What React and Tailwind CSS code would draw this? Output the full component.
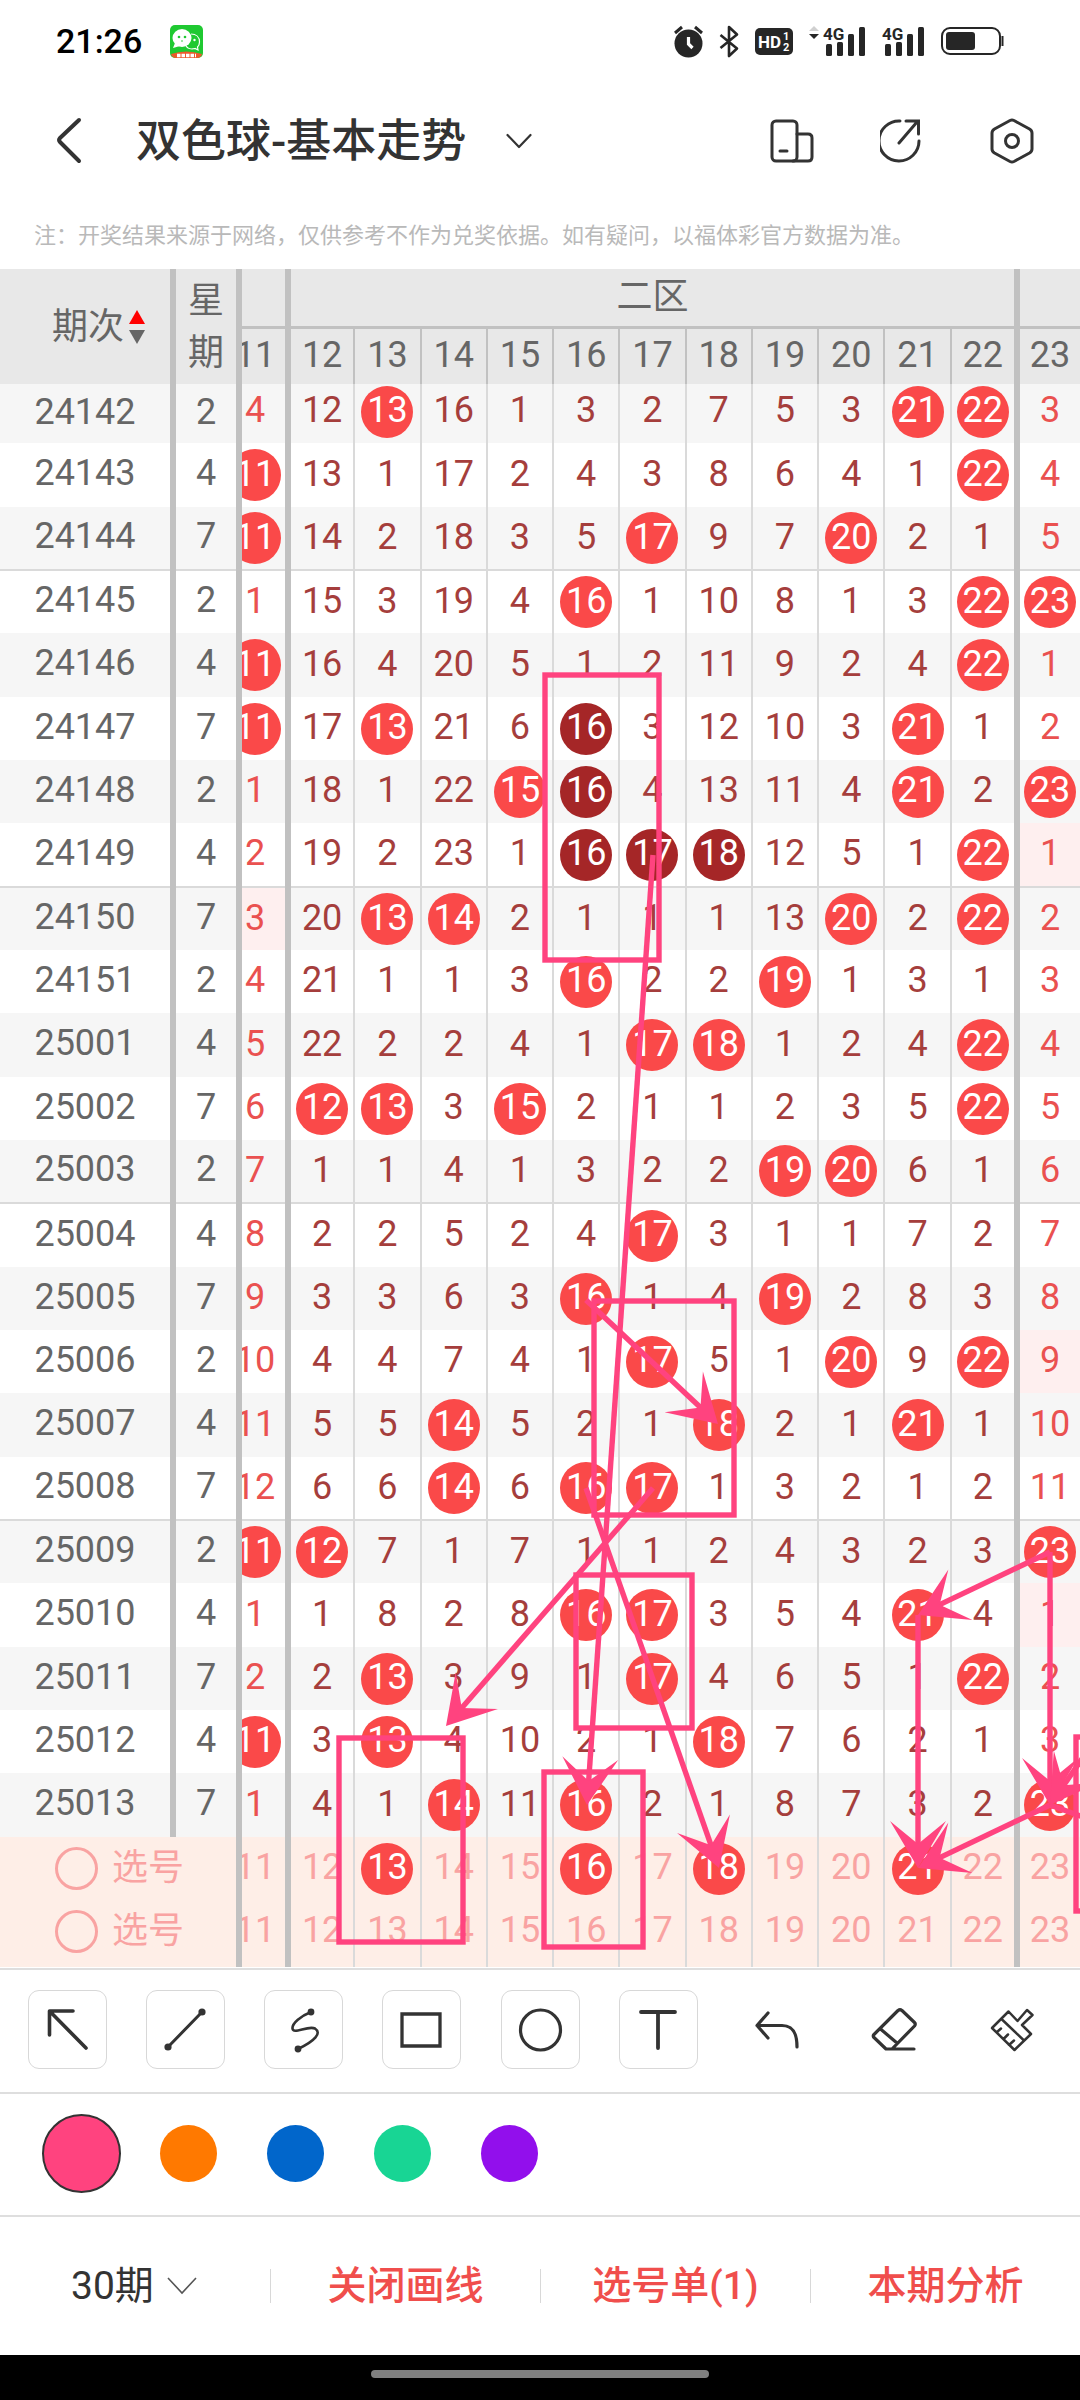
import { Fragment } from "react";

// "*" drawn ball, "!" ball in a streak, "~" tinted cell
const draws = [
  ["24142", 2, "4 12 *13 16 1 3 2 7 5 3 *21 *22 3"],
  ["24143", 4, "*11 13 1 17 2 4 3 8 6 4 1 *22 4"],
  ["24144", 7, "*11 14 2 18 3 5 *17 9 7 *20 2 1 5"],
  ["24145", 2, "1 15 3 19 4 *16 1 10 8 1 3 *22 *23"],
  ["24146", 4, "*11 16 4 20 5 1 2 11 9 2 4 *22 1"],
  ["24147", 7, "*11 17 *13 21 6 !16 3 12 10 3 *21 1 2"],
  ["24148", 2, "1 18 1 22 *15 !16 4 13 11 4 *21 2 *23"],
  ["24149", 4, "2 19 2 23 1 !16 !17 !18 12 5 1 *22 ~1"],
  ["24150", 7, "~3 20 *13 *14 2 1 1 1 13 *20 2 *22 2"],
  ["24151", 2, "4 21 1 1 3 *16 2 2 *19 1 3 1 3"],
  ["25001", 4, "5 22 2 2 4 1 *17 *18 1 2 4 *22 4"],
  ["25002", 7, "6 *12 *13 3 *15 2 1 1 2 3 5 *22 5"],
  ["25003", 2, "7 1 1 4 1 3 2 2 *19 *20 6 1 6"],
  ["25004", 4, "8 2 2 5 2 4 *17 3 1 1 7 2 7"],
  ["25005", 7, "9 3 3 6 3 *16 1 4 *19 2 8 3 8"],
  ["25006", 2, "10 4 4 7 4 1 *17 5 1 *20 9 *22 ~9"],
  ["25007", 4, "11 5 5 *14 5 2 1 *18 2 1 *21 1 10"],
  ["25008", 7, "12 6 6 *14 6 *16 *17 1 3 2 1 2 11"],
  ["25009", 2, "*11 *12 7 1 7 1 1 2 4 3 2 3 *23"],
  ["25010", 4, "1 1 8 2 8 *16 *17 3 5 4 *21 4 ~1"],
  ["25011", 7, "2 2 *13 3 9 1 *17 4 6 5 1 *22 2"],
  ["25012", 4, "*11 3 *13 4 10 2 1 *18 7 6 2 1 3"],
  ["25013", 7, "1 4 1 *14 11 *16 2 1 8 7 3 2 *23"],
];

const balls = [11, 12, 13, 14, 15, 16, 17, 18, 19, 20, 21, 22, 23];
const picks = [[13, 16, 18, 21], []];

const boxes = [
  [545, 675, 114, 285],
  [594, 1301, 140, 214],
  [576, 1575, 116, 153],
  [339, 1738, 124, 204],
  [544, 1772, 99, 175],
  [1076, 1737, 120, 174],
];

const arrows = [
  [653, 855, 587, 1805],
  [586, 1300, 718, 1424],
  [653, 1488, 446, 1726],
  [586, 1488, 719, 1868],
  [1050, 1552, 918, 1615],
  [918, 1615, 918, 1868],
  [1050, 1552, 1050, 1805],
  [1050, 1805, 918, 1868],
  [1116, 1710, 1050, 1805],
];

const colors = [
  ["粉色", "bg-[#ff437f]"],
  ["橙色", "bg-[#ff7900]"],
  ["蓝色", "bg-[#0166cb]"],
  ["绿色", "bg-[#18d594]"],
  ["紫色", "bg-[#920fec]"],
];

function Arrow({ x1, y1, x2, y2 }) {
  const len = Math.hypot(x2 - x1, y2 - y1);
  const ux = (x2 - x1) / len;
  const uy = (y2 - y1) / len;
  const at = (back, side) => `${x2 - ux * back - uy * side} ${y2 - uy * back + ux * side}`;
  return (
    <g>
      <path d={`M${x1} ${y1}L${at(20, 0)}`} fill="none" stroke="#ff437f" strokeWidth="5.4" />
      <path d={`M${at(0, 0)}L${at(47, 28)}L${at(24, 0)}L${at(47, -28)}Z`} fill="#ff437f" />
    </g>
  );
}

function Markup() {
  return (
    <svg className="pointer-events-none absolute inset-0 h-full w-full" viewBox="0 269 1080 1698" preserveAspectRatio="none">
      {boxes.map(([x, y, w, h]) => (
        <rect key={`${x}-${y}`} x={x} y={y} width={w} height={h} fill="none" stroke="#ff437f" strokeWidth="5.4" />
      ))}
      {arrows.map(([x1, y1, x2, y2], i) => (
        <Arrow key={i} x1={x1} y1={y1} x2={x2} y2={y2} />
      ))}
      <path d="M1050 1805L1116 1829" stroke="#ff437f" strokeWidth="5.4" />
    </svg>
  );
}

function divider(ball) {
  if (ball === 11 || ball === 22) return "border-r-6 border-r-[#c1c1c1]";
  if (ball === 23) return "";
  return "border-r-2 border-r-[#dadada]";
}

function Slot({ ball, children }) {
  return (
    <div className="flex justify-end overflow-hidden">
      <div className={`flex shrink-0 justify-center ${ball === 11 ? "w-[60px]" : "w-full"}`}>{children}</div>
    </div>
  );
}

function DrawCell({ ball, value, first }) {
  const mark = /^[*!~]/.test(value) ? value[0] : "";
  const text = mark ? value.slice(1) : value;
  const outer = ball === 11 || ball === 23;
  const tone =
    mark === "*" ? "bg-[#fa4949] text-white"
    : mark === "!" ? "bg-[#a52627] text-white"
    : outer ? "text-[#ea5150]" : "text-[#a53e3c]";
  return (
    <td className={`p-0 ${first ? "pb-1" : ""} ${divider(ball)} ${mark === "~" ? "bg-[#feefef]" : ""}`}>
      <Slot ball={ball}>
        <span className={`flex size-[52px] items-center justify-center rounded-full pb-[3px] ${tone}`}>{text}</span>
      </Slot>
    </td>
  );
}

function TrendTable() {
  return (
    <div className="relative overflow-hidden">
      <table className="w-full table-fixed border-collapse text-[36px] leading-[52px]">
        <colgroup>
          <col className="w-[173px]" />
          <col className="w-[66px]" />
          <col className="w-[49px]" />
          {balls.slice(1, 12).map((b) => <col key={b} />)}
          <col className="w-[63px]" />
        </colgroup>
        <thead className="bg-[#e8e8e8] text-[#666]">
          <tr className="h-[58px]">
            <th rowSpan={2} className="border-r-6 border-[#c1c1c1] p-0 pl-7 font-normal">
              <button className="inline-flex items-center gap-1">
                期次
                <svg width="18" height="36" viewBox="0 0 18 36">
                  <path d="M9 1L17 15H1Z" fill="#f00" />
                  <path d="M1 21H17L9 35Z" fill="#666" />
                </svg>
              </button>
            </th>
            <th rowSpan={2} className="border-r-6 border-[#c1c1c1] p-0 font-normal">星<br />期</th>
            <th className="border-r-6 border-b-3 border-[#c1c1c1] p-0" />
            <th colSpan={11} className="border-r-6 border-b-3 border-[#c1c1c1] p-0 font-normal">二区</th>
            <th className="border-b-3 border-[#c1c1c1] p-0" />
          </tr>
          <tr className="h-[57px]">
            {balls.map((b) => (
              <th key={b} className={`border-[#c1c1c1] p-0 pb-[2px] font-normal ${b === 11 || b === 22 ? "border-r-6" : b === 23 ? "" : "border-r-2"}`}>
                <Slot ball={b}>{b}</Slot>
              </th>
            ))}
          </tr>
        </thead>
        <tbody>
          {draws.map(([issue, day, values], i) => (
            <tr
              key={issue}
              className={`${i === 0 ? "h-[59px]" : i % 3 === 1 ? "h-[64px]" : "h-[63px]"} ${i % 2 ? "bg-white" : "bg-[#f6f6f6]"} ${i % 5 === 2 && i < 20 ? "border-b-2 border-[#dadada]" : ""}`}
            >
              <td className="border-r-6 border-r-[#c1c1c1] p-0 pb-1 text-center text-[#666]">{issue}</td>
              <td className="border-r-6 border-r-[#c1c1c1] p-0 pb-1 text-center text-[#666]">{day}</td>
              {values.split(" ").map((v, k) => (
                <DrawCell key={k} ball={balls[k]} value={v} first={i === 0} />
              ))}
            </tr>
          ))}
          {picks.map((chosen, i) => (
            <tr key={i} className={`bg-[#feeee7] text-[#f9a3a2] ${i === 0 ? "h-[63px]" : "h-[67px]"}`}>
              <td colSpan={2} className={`border-r-6 border-r-[#c1c1c1] p-0 ${i ? "pb-1" : ""}`}>
                <label className="flex items-center gap-[14px] pl-[55px]">
                  <input type="checkbox" className="size-[43px] appearance-none rounded-full border-3 border-[#f9a3a2] checked:bg-[#fa4949]" />
                  <span className="pb-[2px]">选号</span>
                </label>
              </td>
              {balls.map((b) => (
                <td key={b} className={`p-0 ${i ? "pb-1" : ""} ${divider(b)}`}>
                  <Slot ball={b}>
                    <button className={`flex size-[52px] items-center justify-center rounded-full pb-[3px] ${chosen.includes(b) ? "bg-[#fa4949] text-white" : ""}`}>
                      {b}
                    </button>
                  </Slot>
                </td>
              ))}
            </tr>
          ))}
        </tbody>
      </table>
      <Markup />
    </div>
  );
}

function Signal() {
  return (
    <g fill="#262626">
      <text x="0" y="17" fontSize="17" fontWeight="700" fontFamily="Roboto">4G</text>
      <rect x="3" y="21" width="6" height="12" rx="1.5" />
      <rect x="14" y="19" width="6" height="14" rx="1.5" />
      <rect x="25" y="11" width="6" height="22" rx="1.5" />
      <rect x="36" y="4" width="6" height="29" rx="1.5" />
    </g>
  );
}

function StatusBar() {
  return (
    <div className="flex h-[82px] items-center pr-[76px] pl-14">
      <span className="text-[34px] leading-none font-medium text-black">21:26</span>
      <svg className="ml-7" width="33" height="33" viewBox="0 0 33 33">
        <rect width="33" height="33" rx="5" fill="#1fc931" />
        <ellipse cx="12" cy="13" rx="9.5" ry="9" fill="#fff" />
        <path d="M5 18L3 23L10 21Z" fill="#fff" />
        <path d="M21 9c5 0 8.5 3 8.5 8 0 2-1 4-2 5l.5 3-3-1.5c-4 1-8 0-9-3" fill="none" stroke="#fff" strokeWidth="1.2" />
        <circle cx="9" cy="12" r="1.3" fill="#1fc931" />
        <circle cx="15" cy="12" r="1.3" fill="#1fc931" />
        <circle cx="12" cy="16" r=".8" fill="#1fc931" />
        <circle cx="24.5" cy="15" r="1.2" fill="#fff" />
        <path d="M1 29Q16 24 32 29Q31 33 27 33H6Q2 33 1 29Z" fill="#ee5a2c" />
        <path d="M7 30.5H26" stroke="#fff" strokeWidth="3.5" strokeDasharray="3.5 1" />
      </svg>
      <div className="ml-auto flex items-center gap-4">
        <svg width="29" height="33" viewBox="0 0 29 33">
          <circle cx="14.5" cy="18.5" r="14" fill="#262626" />
          <path d="M1 8L8 2M28 8L21 2" stroke="#262626" strokeWidth="3" />
          <path d="M14.5 12V19L18.5 23" fill="none" stroke="#fff" strokeWidth="3.2" />
        </svg>
        <svg width="20" height="33" viewBox="0 0 20 33">
          <path d="M1.5 10L18 23.5L10 31V2L18 9.5L1.5 23" fill="none" stroke="#262626" strokeWidth="2.6" strokeLinejoin="round" />
        </svg>
        <svg width="38" height="28" viewBox="0 0 38 28">
          <rect y="1" width="38" height="27" rx="5" fill="#262626" />
          <text x="3" y="21" fontSize="17" fontWeight="700" fontFamily="Roboto" fill="#fff">HD</text>
          <text x="28" y="13" fontSize="11" fontWeight="700" fontFamily="Roboto" fill="#fff">1</text>
          <text x="28" y="24" fontSize="11" fontWeight="700" fontFamily="Roboto" fill="#fff">2</text>
        </svg>
        <svg width="57" height="36" viewBox="0 0 57 36">
          <path d="M0 8L5 3L10 8Z" fill="#d0d0d0" />
          <path d="M0 11H10L5 16Z" fill="#262626" />
          <g transform="translate(14 0)"><Signal /></g>
        </svg>
        <svg width="43" height="36" viewBox="0 0 43 36"><Signal /></svg>
        <svg width="63" height="30" viewBox="0 0 63 30">
          <rect x="1" y="2" width="58" height="26" rx="8" fill="none" stroke="#262626" strokeWidth="2" />
          <rect x="5" y="6" width="29" height="18" rx="3" fill="#262626" />
          <path d="M61.5 10V20" stroke="#262626" strokeWidth="2" />
        </svg>
      </div>
    </div>
  );
}

function TitleBar() {
  return (
    <header className="flex h-[118px] items-center pr-[46px] pl-14">
      <button aria-label="返回">
        <svg width="26" height="48" viewBox="0 0 26 48" fill="none" stroke="#333" strokeWidth="4" strokeLinecap="round" strokeLinejoin="round">
          <path d="M23 3L4 21Q2 23 4 25L23 44" />
        </svg>
      </button>
      <button className="ml-[54px] flex items-center gap-10">
        <h1 className="pt-[2px] text-[45px] leading-[60px] font-medium text-[#333]">双色球-基本走势</h1>
        <svg width="26" height="16" viewBox="0 0 26 16" fill="none" stroke="#333" strokeWidth="2.2" strokeLinecap="round" strokeLinejoin="round">
          <path d="M1.5 2L13 14L24.5 2" />
        </svg>
      </button>
      <div className="ml-auto flex gap-[66px]">
        <button aria-label="横屏">
          <svg width="44" height="46" viewBox="0 0 44 46" fill="none" stroke="#333" strokeWidth="3" strokeLinecap="round">
            <rect x="2" y="3" width="25" height="40" rx="4" />
            <path d="M27 16H38Q42 16 42 20V39Q42 43 38 43H23M10 33H17" />
          </svg>
        </button>
        <button aria-label="分享">
          <svg width="44" height="46" viewBox="0 0 44 46" fill="none" stroke="#333" strokeWidth="3" strokeLinecap="round">
            <path d="M20 3A20 20 0 1 0 39 23M19 25L37 4M26 3H38.5V16" />
          </svg>
        </button>
        <button aria-label="设置">
          <svg width="44" height="46" viewBox="0 0 44 46" fill="none" stroke="#333" strokeWidth="3">
            <path d="M24 2.5L39.5 11Q42 12.5 42 15V31Q42 33.500 39.5 35L24 43.5Q22 44.5 20 43.5L4.5 35Q2 33.5 2 31V15Q2 12.5 4.5 11L20 2.5Q22 1.5 24 2.5Z" />
            <circle cx="22" cy="23" r="6.5" />
          </svg>
        </button>
      </div>
    </header>
  );
}

const tools = [
  ["箭头", true, <path d="M45 21H21.5V45M22.5 22L58 58" strokeWidth="3.6" />],
  ["直线", true, <Fragment><path d="M22 57L56 22" strokeWidth="3" /><circle cx="22" cy="57" r="3.6" fill="#333" stroke="none" /><circle cx="56" cy="22" r="3.6" fill="#333" stroke="none" /></Fragment>],
  ["曲线", true, <Fragment><path d="M47 22C37 26 28 33 28.5 38.5C29 45 44 35 51 38.5C58 43 51 51 34 59" strokeWidth="2.6" /><circle cx="47" cy="22" r="3.4" fill="#333" stroke="none" /><circle cx="34" cy="59" r="3.4" fill="#333" stroke="none" /></Fragment>],
  ["矩形", true, <path d="M20 24H58V56H20Z" strokeWidth="3.3" strokeLinejoin="miter" />],
  ["圆形", true, <circle cx="39.5" cy="40" r="20" />],
  ["文字", true, <path d="M22 22H56M39 22V58" strokeWidth="3.8" />],
  ["撤销", false, <path d="M31 23L20 35.5L31 48M20 35.5H45C56 35.5 60 43 60 57" />],
  ["橡皮", false, <path d="M43 20.5Q45 19 47 20.5L59.5 32.5Q61 34 59.5 36L37 59H31L18.5 47Q18 46 18.5 45ZM25.5 39L42 53M37 59H59" />],
  ["清空", false, <path d="M54 20L59.5 25L49 35L58 44L41.5 60L19 38L35.5 21.5L44.5 31ZM29 29.5L51 50.5M24 42L28 38.5M30.5 49L35 44.5M36 55L41 50.5" strokeWidth="2.5" />],
];

function Toolbar() {
  return (
    <div className="mt-px flex h-[126px] items-center justify-between border-y-2 border-[#dedede] px-7 pb-[3px]">
      {tools.map(([name, framed, shape]) => (
        <button key={name} aria-label={name} className={`size-[79px] rounded-[11px] border ${framed ? "border-[#d8d8d8]" : "border-transparent"}`}>
          <svg className="block size-full" viewBox="1 1 77 77" fill="none" stroke="#333" strokeWidth="3.2" strokeLinecap="round" strokeLinejoin="round">
            {shape}
          </svg>
        </button>
      ))}
    </div>
  );
}

function ColorBar() {
  return (
    <div className="flex h-[121px] items-center pb-[3px] pl-7">
      {colors.map(([name, tone], i) => (
        <span key={name} className="flex w-[107px] justify-center">
          <input
            type="radio"
            name="pen"
            aria-label={name}
            defaultChecked={i === 0}
            className={`size-[57px] appearance-none rounded-full checked:size-[79px] checked:border-2 checked:border-[#333] ${tone}`}
          />
        </span>
      ))}
    </div>
  );
}

function BottomBar() {
  return (
    <nav className="grid h-[140px] grid-cols-4 items-center border-t-2 border-[#dedede] text-[39px] leading-[56px] font-medium text-[#f04e4c]">
      <div className="flex items-center justify-center gap-3 pr-[2px]">
        <select aria-label="期数" className="w-[84px] appearance-none font-normal text-[#333]">
          <option>30期</option>
          <option>50期</option>
          <option>100期</option>
        </select>
        <svg width="30" height="18" viewBox="0 0 30 18" fill="none" stroke="#555" strokeWidth="1.6">
          <path d="M1 1L15 16L29 1" />
        </svg>
      </div>
      {["关闭画线", "选号单(1)", "本期分析"].map((label) => (
        <div key={label} className="flex items-center">
          <span className="h-[34px] w-px bg-[#d8d8d8]" />
          <button className="grow">{label}</button>
        </div>
      ))}
    </nav>
  );
}

export default function App() {
  return (
    <div className="bg-white font-['Roboto','Noto_Sans_CJK_SC',sans-serif]">
      <StatusBar />
      <TitleBar />
      <p className="flex h-[69px] items-center pt-[2px] pl-[34px] text-[22px] whitespace-nowrap text-[#b9b9b9]">
        注：开奖结果来源于网络，仅供参考不作为兑奖依据。如有疑问，以福体彩官方数据为准。
      </p>
      <TrendTable />
      <Toolbar />
      <ColorBar />
      <BottomBar />
      <div className="flex h-[45px] items-center justify-center bg-black">
        <span className="mb-2 h-2 w-[338px] rounded-full bg-[#808080]" />
      </div>
    </div>
  );
}
